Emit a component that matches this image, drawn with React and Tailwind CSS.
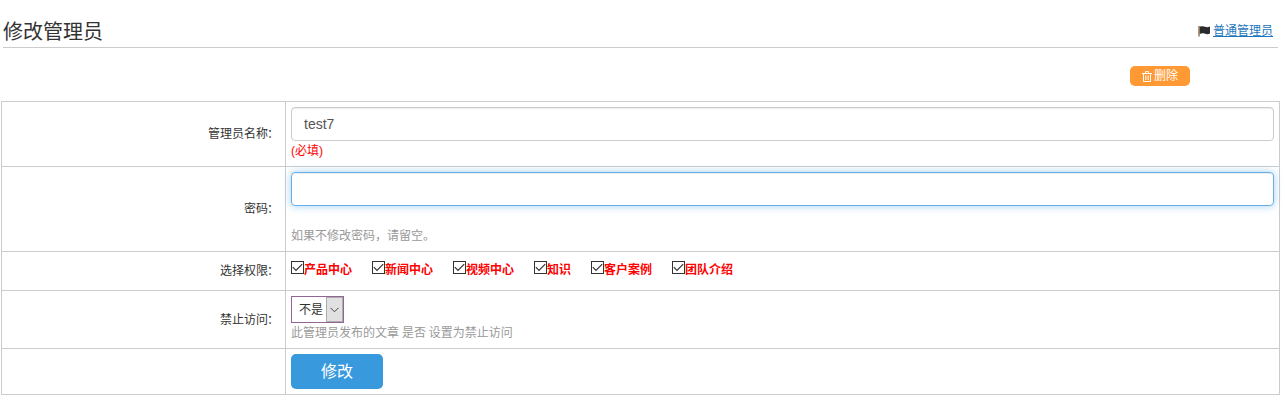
const permissions = ['产品中心', '新闻中心', '视频中心', '知识', '客户案例', '团队介绍'];

function FlagIcon() {
  return (
    <svg className="h-[12px] w-[12px]" viewBox="0 0 12 12">
      <path d="M0.300 1h1.400v10.500h-1.400z" fill="#8f6b4c" />
      <path d="M1.700 1.800C4 1 5.500 1.300 7 1.800s3 .6 5-.2v7c-2 .8-3.500.6-5 .1s-3.300-.6-5.300.3z" fill="#2b2b2b" />
    </svg>
  );
}

function TrashIcon() {
  return (
    <svg className="h-[11px] w-[10px]" viewBox="0 0 10 11" fill="none" stroke="#fff">
      <path d="M0 2.500h10M3.500 2V.5h3V2M1.500 3v7.500h7V3" />
      <path d="M3.500 4.500v4.500M5 4.500v4.500M6.500 4.500v4.500" strokeWidth="0.7" />
    </svg>
  );
}

function Permission({ name }) {
  return (
    <label className="flex h-[13px] items-center">
      <svg className="h-[13px] w-[13px] shrink-0" viewBox="0 0 13 13" fill="none" stroke="#333">
        <rect x="0.5" y="0.5" width="12" height="12" />
        <path d="M1.800 6.200l3.200 3.200 6.200-6.200" strokeWidth="1.200" />
      </svg>
      <span className="relative top-[2px] font-bold text-[#f00]">{name}</span>
    </label>
  );
}

function Row({ label, height, children }) {
  return (
    <div className={`flex border-t border-[#ccc] ${height}`}>
      <div className="flex w-[284px] shrink-0 items-center justify-end border-r border-[#ccc] pr-[5px]">
        {label && (
          <span className="flex">
            {label}
            <span className="-ml-px pr-px">：</span>
          </span>
        )}
      </div>
      <div className="min-w-0 flex-1 p-[5px]">{children}</div>
    </div>
  );
}

export default function App() {
  return (
    <div className="h-[406px] w-[1285px] overflow-hidden bg-white font-['Liberation_Sans','Noto_Sans_CJK_SC',sans-serif] text-[12px] leading-[20px] text-[#333]">
      <header className="ml-[3px] flex h-[48px] w-[1275px] items-start justify-between border-b border-[#ccc] pr-[5px]">
        <h1 className="pt-[17px] text-[20px] leading-[30px]">修改管理员</h1>
        <div className="flex items-center gap-[3px] pt-[21px]">
          <FlagIcon />
          <a className="text-[#1b76bd] underline underline-offset-1" href="#">普通管理员</a>
        </div>
      </header>

      <div className="flex h-[53px] justify-end pt-[18px] pr-[95px]">
        <button className="flex h-[20px] w-[60px] items-center justify-center gap-[2px] rounded-[5px] bg-[#ff9933] text-white">
          <TrashIcon />
          <span>删除</span>
        </button>
      </div>

      <main className="ml-px w-[1279px] border-x border-b border-[#ccc]">
        <Row label="管理员名称" height="h-[65px]">
          <input
            className="block h-[34px] w-full rounded-[4px] border border-[#ccc] px-[12px] text-[14px] text-[#555] shadow-[inset_0_1px_1px_rgba(0,0,0,0.075)] outline-none"
            defaultValue="test7"
          />
          <p className="text-[#f00]">(必填)</p>
        </Row>
        <Row label="密码" height="h-[85px]">
          <input
            className="block h-[34px] w-full rounded-[4px] border border-[#66afe9] px-[12px] text-[14px] shadow-[inset_0_1px_1px_rgba(0,0,0,0.075),0_0_8px_rgba(102,175,233,0.6)] outline-none"
            type="password"
          />
          <p className="pt-[20px] text-[#999]">如果不修改密码，请留空。</p>
        </Row>
        <Row label="选择权限" height="h-[39px]">
          <div className="flex gap-[20px] pt-[4px]">
            {permissions.map((name) => (
              <Permission key={name} name={name} />
            ))}
          </div>
        </Row>
        <Row label="禁止访问" height="h-[58px]">
          <div className="flex h-[27px] w-[53px] items-stretch border border-[#936594] pl-[7px]">
            <span className="flex-1 leading-[27px] whitespace-nowrap">不是</span>
            <span className="flex w-[17px] items-center justify-center border border-[#adadad] bg-[#e1e1e1]">
              <svg className="h-[6px] w-[9px]" viewBox="0 0 9 6" fill="none" stroke="#444">
                <path d="M0.500 0.800l4 4 4-4" />
              </svg>
            </span>
          </div>
          <p className="text-[#999] [word-spacing:-0.4px]">此管理员发布的文章 是否 设置为禁止访问</p>
        </Row>
        <Row label="" height="h-[46px]">
          <button className="block h-[35px] w-[92px] rounded-[5px] bg-[#3899dd] text-[16px] text-white">修改</button>
        </Row>
      </main>
    </div>
  );
}
